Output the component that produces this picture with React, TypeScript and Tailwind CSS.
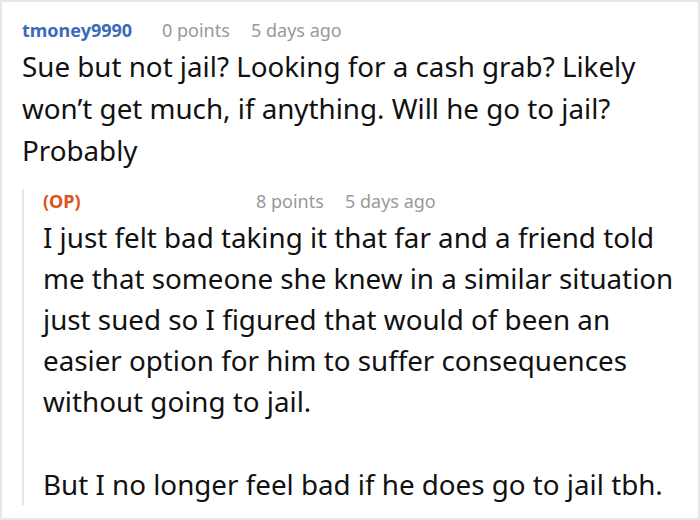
export default function App() {
  return (
    <div
      className="w-[700px] h-[520px] bg-white border-2 border-[#e6e6e6] overflow-hidden"
      style={{ fontFamily: '"Noto Sans", "Open Sans", sans-serif' }}
    >
      <div className="pl-[20px] pt-[14px]">
        <div className="flex items-center h-[28px] text-[18px]">
          <span className="font-bold text-[#3b6bb8] w-[140px]">tmoney9990</span>
          <span className="text-[#999999] w-[89px]">0 points</span>
          <span className="text-[#999999]">5 days ago</span>
        </div>
        <p className="text-[27.75px] leading-[42px] text-[#111111] pr-4 mt-[1px]">
          Sue but not jail? Looking for a cash grab? Likely won’t get much, if anything. Will he go to jail? Probably
        </p>
        <div className="mt-[20px] border-l-2 border-[#e6e6e6] pl-[19px]">
          <div className="flex items-center h-[24px] text-[18px] -mt-[2px]">
            <span className="font-bold text-[#d9541e] w-[213px]">(OP)</span>
            <span className="text-[#999999] w-[89px]">8 points</span>
            <span className="text-[#999999]">5 days ago</span>
          </div>
          <div className="text-[27.75px] leading-[41px] text-[#111111] pr-2 mt-[4px]">
            <p>
              I just felt bad taking it that far and a friend told me that someone she knew in a similar situation just sued so I figured that would of been an easier option for him to suffer consequences without going to jail.
            </p>
            <p className="mt-[42px]">But I no longer feel bad if he does go to jail tbh.</p>
          </div>
        </div>
      </div>
    </div>
  )
}
